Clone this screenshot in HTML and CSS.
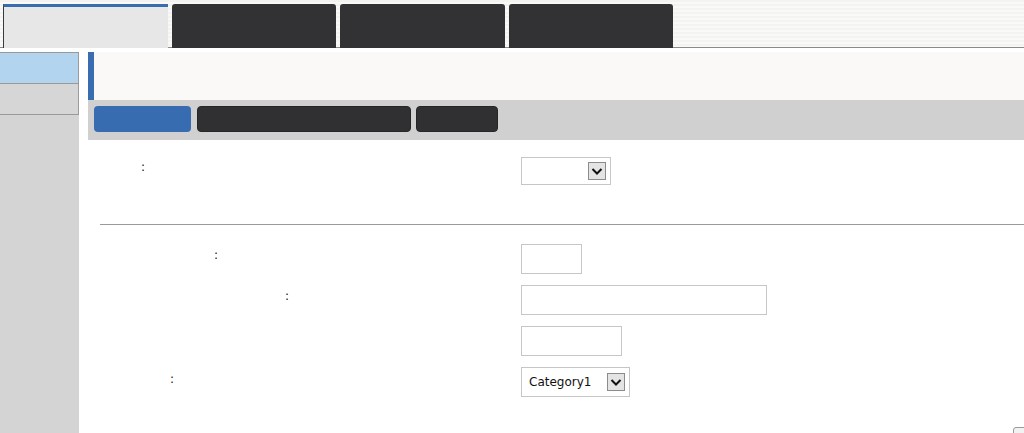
FILE: index.html
```
<!DOCTYPE html>
<html>
<head>
<meta charset="utf-8">
<link rel="stylesheet" href="styles.css">
</head>
<body>
<div class="topbar">
  <div class="tab tab-active"></div>
  <div class="tab tab-dark"></div>
  <div class="tab tab-dark tab-wide"></div>
  <div class="tab tab-dark"></div>
</div>
<div class="layout">
  <aside class="sidebar">
    <div class="side-item side-active"></div>
    <div class="side-item"></div>
  </aside>
  <main class="main">
    <div class="header"></div>
    <div class="subbar">
      <div class="btn btn-blue"></div>
      <div class="btn btn-dark btn-long"></div>
      <div class="btn btn-dark btn-short"></div>
    </div>
    <div class="form">
      <div class="row">
        <div class="label l1">:</div>
        <div class="select sel1">
          <span class="sel-text"></span>
          <span class="arrow"><svg width="16" height="16" viewBox="0 0 16 16"><polyline points="3.5,6 8,10.5 12.5,6" fill="none" stroke="#111" stroke-width="2"/></svg></span>
        </div>
      </div>
      <div class="divider"></div>
      <div class="rows">
        <div class="row">
          <div class="label l2">:</div>
          <div class="input in1"></div>
        </div>
        <div class="row">
          <div class="label l3">:</div>
          <div class="input in2"></div>
        </div>
        <div class="row">
          <div class="label"></div>
          <div class="input in3"></div>
        </div>
        <div class="row">
          <div class="label l5">:</div>
          <div class="select sel2">
            <span class="sel-text">Category1</span>
            <span class="arrow"><svg width="16" height="16" viewBox="0 0 16 16"><polyline points="3.5,6 8,10.5 12.5,6" fill="none" stroke="#111" stroke-width="2"/></svg></span>
          </div>
        </div>
      </div>
      <div class="foot"><div class="corner-btn"></div></div>
    </div>
  </main>
</div>
</body>
</html>
```
FILE: styles.css
```
html, body {
  margin: 0;
  padding: 0;
  height: 433px;
  overflow: hidden;
  background: #ffffff;
  font-family: "DejaVu Sans", Verdana, sans-serif;
  font-size: 12px;
  color: #111;
}

.topbar {
  box-sizing: border-box;
  height: 48px;
  border-bottom: 1px solid #8a8a8a;
  display: flex;
  align-items: flex-end;
  gap: 4px;
  padding-left: 3px;
  background: repeating-linear-gradient(to bottom, #f4f3f1 0, #f4f3f1 2px, #f9f9f8 2px, #f9f9f8 4px);
}

.tab {
  box-sizing: border-box;
  width: 164px;
  height: 44px;
  margin-bottom: -1px;
  border-radius: 3px 3px 0 0;
}

.tab-active {
  width: 165px;
  background: #e7e7e7;
  border-top: 3px solid #3a6cb0;
  border-left: 1px solid #3a3a3a;
  border-radius: 0;
}

.tab-dark {
  background: #323234;
}

.tab-wide {
  width: 165px;
}

.layout {
  display: grid;
  grid-template-columns: 79px 1fr;
  column-gap: 9px;
  margin-top: 4px;
  height: 381px;
}

.sidebar {
  background: #d4d4d4;
  display: flex;
  flex-direction: column;
}

.side-item {
  box-sizing: border-box;
  height: 31px;
  border-right: 1px solid #9a9a9a;
  border-bottom: 1px solid #9a9a9a;
  background: #d6d6d6;
}

.side-item.side-active {
  border-top: 1px solid #9a9a9a;
  background: #b3d4ef;
  height: 32px;
}

.main {
  display: flex;
  flex-direction: column;
  min-width: 0;
}

.header {
  box-sizing: border-box;
  height: 48px;
  background: #faf9f7;
  border-left: 6px solid #3a6cb0;
}

.subbar {
  box-sizing: border-box;
  height: 40px;
  background: #d0d0d0;
  display: flex;
  align-items: flex-start;
  padding: 6px 6px 0 6px;
  gap: 6px;
}

.btn {
  box-sizing: border-box;
  height: 26px;
  border-radius: 4px;
}

.btn-blue {
  width: 97px;
  background: #386cb1;
}

.btn-dark {
  background: #303032;
  border: 1px solid #262628;
}

.btn-long {
  width: 214px;
}

.btn-short {
  width: 82px;
  margin-left: -1px;
}

.form {
  padding-top: 17px;
  display: flex;
  flex-direction: column;
}

.row {
  display: flex;
  align-items: flex-start;
}

.label {
  box-sizing: border-box;
  width: 433px;
  flex: none;
  padding-top: 2px;
  line-height: 16px;
  font-size: 12px;
}

.l1 { padding-left: 53px; }
.l2 { padding-left: 126px; padding-top: 3px; }
.l3 { padding-left: 197px; padding-top: 3px; }
.l5 { padding-left: 82px; padding-top: 4px; }

.rows {
  display: flex;
  flex-direction: column;
  gap: 11px;
}

.input {
  box-sizing: border-box;
  height: 30px;
  border: 1px solid #c6c6c6;
  background: #fff;
}

.in1 { width: 61px; }
.in2 { width: 246px; }
.in3 { width: 101px; }

.select {
  box-sizing: border-box;
  border: 1px solid #c6c6c6;
  background: #fff;
  display: flex;
  align-items: center;
  padding: 0 4px 0 7px;
}

.sel1 {
  width: 90px;
  height: 28px;
}

.sel2 {
  width: 109px;
  height: 30px;
}

.sel-text {
  flex: 1;
  font-size: 12px;
  color: #111;
  white-space: nowrap;
}

.arrow {
  box-sizing: border-box;
  width: 18px;
  height: 18px;
  border: 1px solid #8c8c8c;
  background: #e4e4e4;
  display: flex;
  align-items: center;
  justify-content: center;
}

.divider {
  margin: 39px 0 19px 12px;
  height: 1px;
  background: #9a9a9a;
}

.foot {
  display: flex;
  justify-content: flex-end;
  margin-top: 30px;
}

.corner-btn {
  box-sizing: border-box;
  width: 20px;
  height: 20px;
  border: 1px solid #9a9a9a;
  border-radius: 3px;
  background: #f2f2f2;
  margin-right: -9px;
}
```
